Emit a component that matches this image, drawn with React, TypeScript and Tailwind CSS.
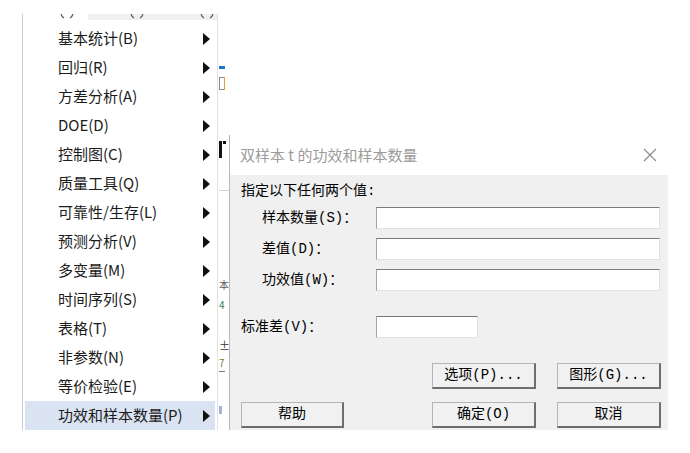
const menuItems = [
  "基本统计(B)",
  "回归(R)",
  "方差分析(A)",
  "DOE(D)",
  "控制图(C)",
  "质量工具(Q)",
  "可靠性/生存(L)",
  "预测分析(V)",
  "多变量(M)",
  "时间序列(S)",
  "表格(T)",
  "非参数(N)",
  "等价检验(E)",
  "功效和样本数量(P)",
];

const sans = "font-['Noto_Sans_CJK_SC','Noto_Sans',sans-serif]";
const dlgFont = "font-['Liberation_Mono','Noto_Sans_CJK_SC',monospace]";

function Arrow() {
  return (
    <svg width="7" height="12" viewBox="0 0 7 12" className="shrink-0">
      <path d="M0 0 L7 6 L0 12 Z" fill="#111" />
    </svg>
  );
}

// bottoms of the menubar's parentheses peeking out above the menu
function ParenTails() {
  return (
    <svg width="16" height="5" viewBox="0 0 16 5">
      <path d="M2 0 Q3 3 5 4 M14 0 Q13 3 11 4" stroke="#555" strokeWidth="1.2" fill="none" />
    </svg>
  );
}

function Field({ width }: { width: string }) {
  return (
    <div
      className={`${width} h-[22px] bg-white border border-[#e2e2e2] border-t-[#7a7a7a] border-l-[#a3a3a3]`}
    />
  );
}

function Btn({ label, width = "w-[104px]" }: { label: string; width?: string }) {
  return (
    <div
      className={`${width} h-[26px] flex items-center justify-center bg-[#f1f1f1] border border-[#b4b4b4] border-r-2 border-b-2 border-r-[#6e6e6e] border-b-[#6e6e6e] text-[14px] text-black`}
    >
      {label}
    </div>
  );
}

export default function App() {
  return (
    <div className={`w-[690px] h-[453px] bg-white flex pt-[14px] pl-[22px] overflow-hidden ${sans}`}>
      {/* menu */}
      <div className="w-[196px] h-[416px] border-l border-r border-l-[#cfcfcf] border-r-[#e2e2e2] flex flex-col">
        <div className="h-[10px] flex">
          <div className="w-[65px] pl-[36px]">
            <ParenTails />
          </div>
          <div className="flex-1 h-[6px] bg-[#f0f0f0] flex justify-between pl-[41px] pr-[2px]">
            <ParenTails />
            <ParenTails />
          </div>
        </div>
        {menuItems.map((item, i) => (
          <div
            key={item}
            className={`h-[29px] mx-[2px] pl-[33px] pr-[5px] flex items-center justify-between text-[15px] text-[#1b1b1b] ${
              i === menuItems.length - 1 ? "bg-[#d9e3f2]" : ""
            }`}
          >
            <span className="leading-[29px] -translate-y-[1px]">{item}</span>
            <Arrow />
          </div>
        ))}
      </div>

      {/* background app sliver */}
      <div className="w-[11px] h-[416px] flex flex-col pl-[1px]">
        <div className="mt-[52px] w-[6px] h-[3px] bg-[#1f74c4]" />
        <div className="mt-[8px] flex h-[13px]">
          <div className="w-[5px] h-[13px] border-l border-t border-b border-[#8a8a8a]" />
          <div className="w-[1px] h-[13px] bg-[#e0a040]" />
        </div>
        <div className="mt-[51px] flex gap-[1px] h-[17px]">
          <div className="w-[3px] h-[17px] bg-[#111]" />
          <div className="w-[3px] h-[3px] bg-[#111]" />
        </div>
        <div className="mt-[32px] w-[10px] h-[1px] bg-[#d0d0d0]" />
        <div className="mt-[88px] text-[10px] leading-[12px] text-[#555]">本</div>
        <div className="mt-[8px] text-[10px] leading-[12px] text-[#3a7a50]">4</div>
        <div className="mt-[28px] text-[11px] leading-[12px] text-[#333]">±</div>
        <div className="mt-[6px] text-[10px] leading-[12px] text-[#8a7a30]">7</div>
        <div className="mt-[2px] w-[6px] h-[1px] bg-[#777]" />
        <div className="mt-[34px] w-[3px] h-[8px] bg-[#9fb4d8]" />
      </div>

      {/* dialog */}
      <div className="mt-[121px] w-[439px] h-[295px] border-l border-[#b9b9b9] flex flex-col">
        <div className="h-[40px] bg-white flex items-center justify-between pl-[10px] pr-[11px]">
          <span className="text-[15px] text-[#9c9c9c]">双样本 t 的功效和样本数量</span>
          <svg width="14" height="14" viewBox="0 0 14 14">
            <path d="M1 1 L13 13 M13 1 L1 13" stroke="#8a8a8a" strokeWidth="1.1" />
          </svg>
        </div>
        <div className={`flex-1 bg-[#f0f0f0] flex flex-col text-[14px] text-black ${dlgFont}`}>
          <div className="mt-[7px] h-[18px] leading-[18px] pl-[11px]">指定以下任何两个值:</div>
          <div className="mt-[7px] flex flex-col gap-[9px]">
            {["样本数量(S)：", "差值(D)：", "功效值(W)："].map((l) => (
              <div key={l} className="flex items-center h-[22px]">
                <div className="w-[146px] pl-[32px]">{l}</div>
                <Field width="w-[284px]" />
              </div>
            ))}
          </div>
          <div className="mt-[25px] flex items-center h-[22px]">
            <div className="w-[146px] pl-[11px]">标准差(V)：</div>
            <Field width="w-[102px]" />
          </div>
          <div className="mt-[25px] flex pl-[202px] gap-[21px]">
            <Btn label="选项(P)..." />
            <Btn label="图形(G)..." />
          </div>
          <div className="mt-[13px] flex pl-[11px]">
            <Btn label="帮助" width="w-[103px]" />
            <div className="ml-[88px] flex gap-[21px]">
              <Btn label="确定(O)" />
              <Btn label="取消" />
            </div>
          </div>
        </div>
      </div>
    </div>
  );
}
